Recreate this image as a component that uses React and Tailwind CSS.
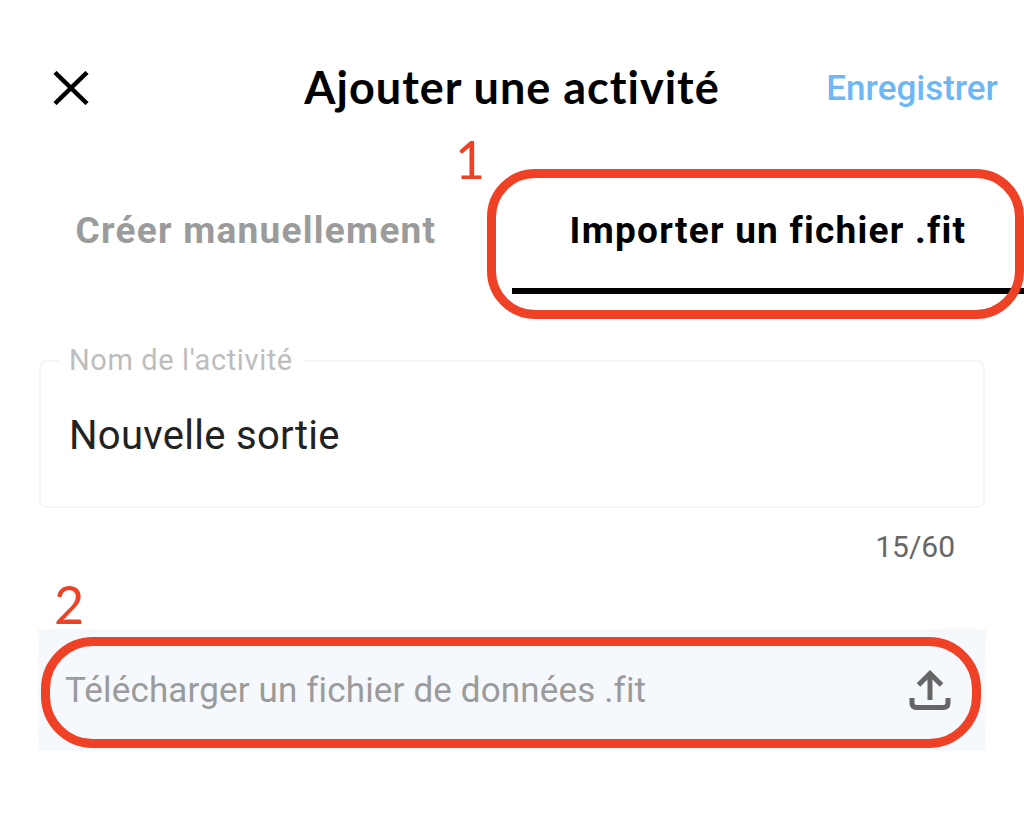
import React from 'react';

const roboto = "font-['Roboto',sans-serif]";

function CloseIcon() {
  return (
    <svg width="36" height="34" viewBox="0 0 36 34" fill="none" stroke="#000" strokeWidth="4.5" strokeLinecap="butt">
      <path d="M2 1.5 L34 32.5" />
      <path d="M34 1.5 L2 32.5" />
    </svg>
  );
}

function UploadIcon() {
  return (
    <svg width="42" height="42" viewBox="0 0 42 42" fill="none" stroke="#666" strokeWidth="5">
      <path d="M21 31 V5" />
      <path d="M9.5 16 L21 4.5 L32.5 16" />
      <path d="M3 29 V34 Q3 38.5 7.5 38.5 H34.5 Q39 38.5 39 34 V29" />
    </svg>
  );
}

export default function App() {
  return (
    <div className="relative h-[813px] w-full overflow-hidden bg-white">
      {/* Header */}
      <div className="grid h-[80px] mt-[48px] grid-cols-[1fr_auto_1fr] items-center">
        <div className="pl-[53px]">
          <CloseIcon />
        </div>
        <h1 className="font-['Lato',sans-serif] text-[45px] font-bold tracking-[1px] text-black">Ajouter une activité</h1>
        <div className={`${roboto} pr-[26px] pt-[3px] text-right text-[35px] font-medium text-[#6db7f5]`}>Enregistrer</div>
      </div>

      {/* Tabs */}
      <div className={`${roboto} mt-[40px] grid grid-cols-2 text-[37px] font-bold tracking-[1.25px]`}>
        <div className="flex h-[126px] items-center justify-center text-[#9b9b9b]">Créer manuellement</div>
        <div className="flex h-[126px] items-center justify-center border-b-[6px] border-black pt-[6px] text-black">
          Importer un fichier .fit
        </div>
      </div>

      {/* Name field */}
      <div className={`${roboto} mx-[39px] mt-[66px]`}>
        <div className="relative flex h-[148px] items-center rounded-lg border-2 border-[#f4f6f9] pl-[28px] pr-[29px] pt-[3px]">
          <span className="absolute -top-[20px] left-[18px] bg-white px-[10px] text-[29px] leading-[36px] tracking-[0.6px] text-[#bdbdbd]">
            Nom de l'activité
          </span>
          <span className="text-[40px] tracking-[0.3px] text-[#222222]">Nouvelle sortie</span>
        </div>
        <div className="pr-[30px] pt-[21px] text-right text-[30px] leading-[36px] text-[#666666]">15/60</div>
      </div>

      {/* Upload row */}
      <div className={`${roboto} mx-[38px] mt-[64px] flex h-[122px] items-center justify-between bg-[#f5f8fc] pl-[27px] pr-[35px]`}>
        <span className="pt-[3px] text-[35px] tracking-[0.15px] text-[#9b9b9b]">Télécharger un fichier de données .fit</span>
        <UploadIcon />
      </div>

      {/* Red annotations */}
      <div className="absolute left-[487px] top-[169px] h-[150px] w-[537px] rounded-[48px] border-[9px] border-[#ee4126]" />
      <div className="absolute left-[41px] top-[637px] h-[111px] w-[940px] rounded-[52px] border-[9px] border-[#ee4126]" />
      <span className="absolute left-[455px] top-[127px] font-['Lato',sans-serif] text-[52px] leading-[64px] text-[#ee4126]">1</span>
      <span className="absolute left-[54px] top-[572px] font-['Lato',sans-serif] text-[52px] leading-[64px] text-[#ee4126]">2</span>
    </div>
  );
}
